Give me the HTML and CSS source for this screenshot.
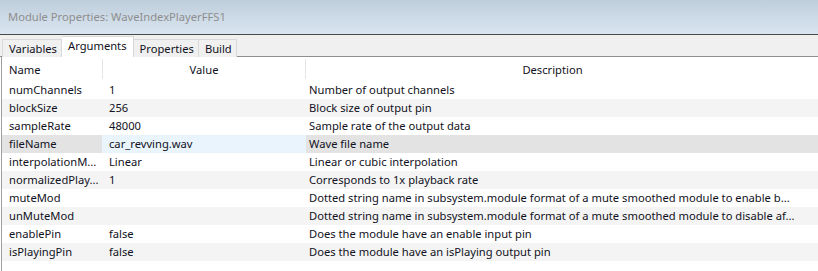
FILE: index.html
```html
<!DOCTYPE html>
<html lang="en">
<head>
    <meta charset="UTF-8">
    <title>Module Properties</title>
    <link rel="stylesheet" href="styles.css">
</head>
<body>

    <!-- Title Bar -->
    <div class="titlebar">Module Properties: WaveIndexPlayerFFS1</div>

    <!-- Tabs -->
    <div class="tabs">
        <div class="tab">Variables</div>
        <div class="tab active">Arguments</div>
        <div class="tab">Properties</div>
        <div class="tab">Build</div>
    </div>

    <!-- Arguments Grid -->
    <div class="panel">
        <div class="row head">
            <div class="cell name">Name</div>
            <div class="cell value">Value</div>
            <div class="cell desc">Description</div>
        </div>
        <div class="row">
            <div class="cell name">numChannels</div>
            <div class="cell value">1</div>
            <div class="cell desc">Number of output channels</div>
        </div>
        <div class="row alt">
            <div class="cell name">blockSize</div>
            <div class="cell value">256</div>
            <div class="cell desc">Block size of output pin</div>
        </div>
        <div class="row">
            <div class="cell name">sampleRate</div>
            <div class="cell value">48000</div>
            <div class="cell desc">Sample rate of the output data</div>
        </div>
        <div class="row selected">
            <div class="cell name">fileName</div>
            <div class="cell value">car_revving.wav</div>
            <div class="cell desc">Wave file name</div>
        </div>
        <div class="row">
            <div class="cell name">interpolationM...</div>
            <div class="cell value">Linear</div>
            <div class="cell desc">Linear or cubic interpolation</div>
        </div>
        <div class="row alt">
            <div class="cell name">normalizedPlay...</div>
            <div class="cell value">1</div>
            <div class="cell desc">Corresponds to 1x playback rate</div>
        </div>
        <div class="row">
            <div class="cell name">muteMod</div>
            <div class="cell value"></div>
            <div class="cell desc">Dotted string name in subsystem.module format of a mute smoothed module to enable b...</div>
        </div>
        <div class="row alt">
            <div class="cell name">unMuteMod</div>
            <div class="cell value"></div>
            <div class="cell desc">Dotted string name in subsystem.module format of a mute smoothed module to disable af...</div>
        </div>
        <div class="row">
            <div class="cell name">enablePin</div>
            <div class="cell value">false</div>
            <div class="cell desc">Does the module have an enable input pin</div>
        </div>
        <div class="row alt">
            <div class="cell name">isPlayingPin</div>
            <div class="cell value">false</div>
            <div class="cell desc">Does the module have an isPlaying output pin</div>
        </div>
    </div>

</body>
</html>
```

FILE: styles.css
```css
/* General Styles */
body {
    margin: 0;
    width: 818px;
    height: 271px;
    overflow: hidden;
    background: white;
    font-family: "Noto Sans", sans-serif;
    font-size: 11.2px;
    color: #111122;
}

/* Title Bar */
.titlebar {
    height: 34px;
    line-height: 34px;
    padding-left: 8px;
    color: #8e8e8e;
    background: linear-gradient(#bfcedb, #d9e5f1);
    border-bottom: 1px solid #4a4a4a;
}

/* Tabs */
.tabs {
    height: 21px;
    background: #f0f0f0;
    border-bottom: 1px solid #8e8e8e;
    display: flex;
    align-items: flex-end;
    padding-left: 2px;
}

.tab {
    height: 17px;
    line-height: 18px;
    padding: 0 4px 0 6px;
    background: #f0f0f0;
    border: 1px solid #d9d9d9;
    border-bottom: none;
    margin-bottom: -1px;
}

.tab + .tab {
    border-left: none;
}

.tab.active {
    height: 20px;
    line-height: 17px;
    background: white;
    border-color: #d9d9d9;
    padding: 0 6px;
    position: relative;
    z-index: 1;
}

/* Grid */
.panel {
    margin-left: 1px;
    border-left: 1px solid #a0a0a0;
    height: 215px;
}

.row {
    display: grid;
    grid-template-columns: 100px 204px 1fr;
    height: 18px;
    line-height: 18px;
}

.row.alt {
    background: #f4f4f4;
}

.row.head {
    height: 24px;
    line-height: 24px;
}

.cell {
    white-space: nowrap;
    overflow: hidden;
}

.cell.name {
    padding-left: 7px;
}

.cell.value {
    padding-left: 7px;
}

.cell.desc {
    padding-left: 3px;
}

.head .value {
    text-align: center;
    padding-left: 0;
    border-left: 1px solid #e5e5e5;
    border-right: 1px solid #e5e5e5;
    margin: 2px 0;
    line-height: 21px;
}

.head .name {
    margin: 2px 0;
    line-height: 21px;
}

.head .desc {
    text-align: center;
    padding-right: 22px;
    margin: 2px 0;
    line-height: 21px;
}

.row.selected .name,
.row.selected .desc {
    background: #e3e3e3;
}

.row.selected .value {
    background: #eaf4fd;
}
```
